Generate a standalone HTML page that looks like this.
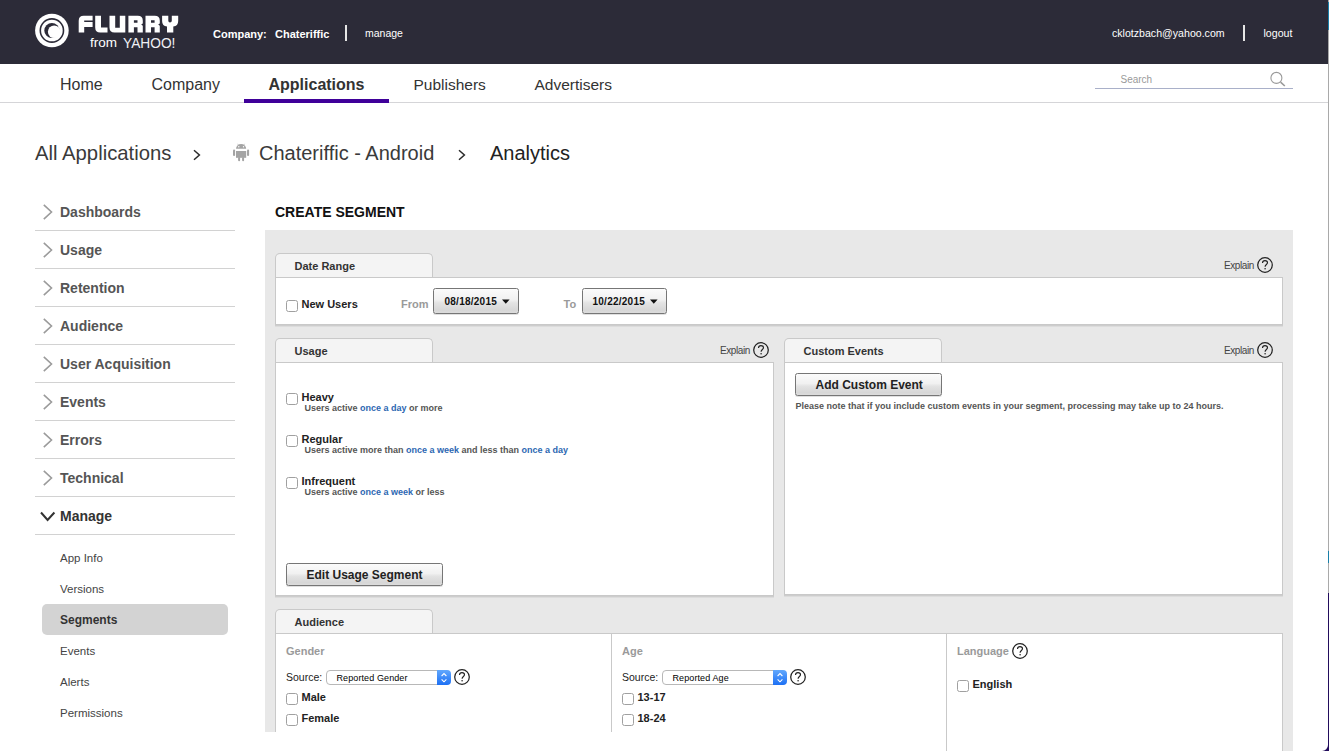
<!DOCTYPE html>
<html><head><meta charset="utf-8">
<style>
*{box-sizing:border-box}
html,body{margin:0;padding:0}
body{width:1329px;height:751px;overflow:hidden;position:relative;background:#fff;font-family:"Liberation Sans",sans-serif;color:#333}
.a{position:absolute;white-space:nowrap}
.t{position:absolute;white-space:nowrap;line-height:1}
.sep{position:absolute;left:35px;width:200px;height:1px;background:#d2d2d2}
.panel{position:absolute;background:#fff;border:1px solid #c9c9c9}
.tab{position:absolute;background:#f4f4f4;border:1px solid #c9c9c9;border-bottom:none;border-radius:5px 5px 0 0}
.cb{position:absolute;width:12px;height:12px;border:1px solid #a0a0a0;border-radius:2.5px;background:#fff}
.btn{position:absolute;border:1px solid #767676;border-radius:2.5px;background:linear-gradient(#fbfbfb,#f1f1f1 45%,#e3e3e3 58%,#d7d7d7 88%,#dcdcdc);box-shadow:0 1px 0 rgba(0,0,0,.12)}
.blue{color:#2d67b2}
</style></head><body>

<div class="a" style="left:0px;top:0px;width:1328px;height:64px;background:#2c2b38;"></div>
<div class="a" style="left:1328px;top:0px;width:1px;height:751px;background:#a9a9a9;"></div>
<div class="a" style="left:1328px;top:2px;width:1px;height:28px;background:#1a7fa8;"></div>
<div class="a" style="left:1328px;top:551px;width:1px;height:12px;background:#1a7fa8;"></div>
<div class="a" style="left:1328px;top:593px;width:1px;height:158px;background:#220c5c;"></div>
<svg class="a" style="left:0;top:0" width="200" height="64" viewBox="0 0 200 64">
  <circle cx="51.9" cy="30.5" r="16.8" fill="#fff"/>
  <circle cx="51.9" cy="30.5" r="11.6" fill="none" stroke="#2c2b38" stroke-width="1.6"/>
  <circle cx="51.9" cy="30.5" r="7.6" fill="#2c2b38"/>
  <circle cx="54.2" cy="31.8" r="6.3" fill="#fff"/>
  <path fill="#fff" d="M78.7,32.5 V20.7 Q78.7,15.7 83.7,15.7 H92.6 V20.6 H84.2 V22 H92.6 V26.9 H84.2 V32.5 Z"/>
  <path fill="#fff" d="M95.2,15.7 H101 V27.6 H107.5 V32.5 H100.2 Q95.2,32.5 95.2,27.5 Z"/>
  <path fill="#fff" d="M109.5,15.7 H115.2 V27.8 H119.8 V15.7 H125.3 V32.5 H114.5 Q109.5,32.5 109.5,27.5 Z"/>
  <path fill="#fff" fill-rule="evenodd" d="M128.4,32.6 V15.8 H137.8 Q142.8,15.8 142.8,20.8 V23.6 L141.2,24.6 L142.8,25.8 V32.6 H137.5 V27.2 H133.9 V32.6 Z M133.9,20.2 H137.5 V22.7 H133.9 Z"/>
  <path fill="#fff" fill-rule="evenodd" d="M145.5,32.6 V15.8 H154.8 Q159.8,15.8 159.8,20.8 V23.6 L158.2,24.6 L159.8,25.8 V32.6 H154.6 V27.2 H151 V32.6 Z M151,20.2 H154.6 V22.7 H151 Z"/>
  <path fill="#fff" d="M162.1,15.8 H168.3 V20.8 Q168.3,22.4 170,22.4 Q171.8,22.4 171.8,20.8 V15.8 H178.2 V21 Q178.2,26 173.3,26.6 V32.6 H167 V26.6 Q162.1,26 162.1,21 Z"/>
</svg>
<div class="t" style="left:90px;top:36px;font-size:13.5px;color:#fff">from</div>
<div class="t" style="left:123px;top:35px;font-size:15px;color:#f0f0f4;transform:scaleX(0.915);transform-origin:0 0">YAHOO!</div>
<div class="t" style="left:213px;top:29px;font-size:11px;color:#fff;font-weight:bold">Company:</div>
<div class="t" style="left:275px;top:29px;font-size:11px;color:#fff;font-weight:bold">Chateriffic</div>
<div class="a" style="left:345px;top:25px;width:1.6px;height:16px;background:#e6e6e6;"></div>
<div class="t" style="left:365px;top:28px;font-size:10.5px;color:#fff">manage</div>
<div class="t" style="left:1112px;top:28px;font-size:10.6px;color:#fff">cklotzbach@yahoo.com</div>
<div class="a" style="left:1243.3px;top:25px;width:1.6px;height:16px;background:#e6e6e6;"></div>
<div class="t" style="left:1263.5px;top:28px;font-size:10.6px;color:#fff">logout</div>
<div class="a" style="left:0px;top:102px;width:1328px;height:1px;background:#d5d5d8;"></div>
<div class="a" style="left:244px;top:99px;width:145px;height:4px;background:#3f0099;"></div>
<div class="t" style="left:60px;top:77px;font-size:16px;color:#333">Home</div>
<div class="t" style="left:151.5px;top:77px;font-size:16px;color:#333">Company</div>
<div class="t" style="left:268.5px;top:77px;font-size:16px;color:#333;font-weight:bold">Applications</div>
<div class="t" style="left:413.5px;top:77px;font-size:15.5px;color:#333">Publishers</div>
<div class="t" style="left:534.5px;top:77px;font-size:15.5px;color:#333">Advertisers</div>
<div class="a" style="left:1095px;top:88px;width:198px;height:1px;background:#a9b0c9;"></div>
<div class="t" style="left:1120.5px;top:75px;font-size:10px;color:#9a9a9a">Search</div>
<svg class="a" style="left:1266px;top:68px" width="24" height="22" viewBox="1266 68 24 22">
  <circle cx="1276.4" cy="77.9" r="5.5" fill="none" stroke="#9a9a9a" stroke-width="1.1"/>
  <line x1="1280.6" y1="82.1" x2="1284.8" y2="86" stroke="#9a9a9a" stroke-width="1.6"/>
</svg>
<div class="t" style="left:35px;top:143px;font-size:20.3px;color:#3a3a3a">All Applications</div>
<svg class="a" style="left:190px;top:148px" width="14" height="14" viewBox="190 148 14 14"><polyline points="194,150.2 199.4,155 194,159.8" fill="none" stroke="#2a2a2a" stroke-width="1.5"/></svg>
<svg class="a" style="left:230px;top:142px" width="22" height="22" viewBox="230 142 22 22">
  <path d="M236,148.7 A5.1,4.6 0 0 1 246.2,148.7 Z" fill="#a4a4a4"/>
  <rect x="236" y="151" width="10.2" height="6.8" fill="#a4a4a4"/><line x1="237.6" y1="143.8" x2="238.8" y2="145.6" stroke="#a4a4a4" stroke-width="0.6"/><line x1="244.6" y1="143.8" x2="243.4" y2="145.6" stroke="#a4a4a4" stroke-width="0.6"/>
  <rect x="233" y="149.6" width="2.1" height="6.4" rx="1" fill="#a4a4a4"/>
  <rect x="247" y="149.6" width="2.1" height="6.4" rx="1" fill="#a4a4a4"/>
  <rect x="238.1" y="157" width="2" height="4.2" rx="1" fill="#a4a4a4"/>
  <rect x="242.1" y="157" width="2" height="4.2" rx="1" fill="#a4a4a4"/>
  <circle cx="238.8" cy="146.7" r="0.7" fill="#fff"/>
  <circle cx="243.5" cy="146.7" r="0.7" fill="#fff"/>
</svg>
<div class="t" style="left:259px;top:143px;font-size:20px;color:#3a3a3a">Chateriffic - Android</div>
<svg class="a" style="left:455px;top:148px" width="14" height="14" viewBox="455 148 14 14"><polyline points="459,150.2 464.4,155 459,159.8" fill="none" stroke="#2a2a2a" stroke-width="1.5"/></svg>
<div class="t" style="left:490px;top:143px;font-size:20px;color:#222">Analytics</div>
<div class="t" style="left:60px;top:205px;font-size:14px;font-weight:bold;color:#555">Dashboards</div>
<svg class="a" style="left:40px;top:202.5px" width="16" height="18" viewBox="0 0 16 18"><polyline points="3.8,1.8 11.5,9 3.8,16.2" fill="none" stroke="#9b9b9b" stroke-width="1.6"/></svg>
<div class="sep" style="top:230px"></div>
<div class="t" style="left:60px;top:243px;font-size:14px;font-weight:bold;color:#555">Usage</div>
<svg class="a" style="left:40px;top:240.5px" width="16" height="18" viewBox="0 0 16 18"><polyline points="3.8,1.8 11.5,9 3.8,16.2" fill="none" stroke="#9b9b9b" stroke-width="1.6"/></svg>
<div class="sep" style="top:268px"></div>
<div class="t" style="left:60px;top:281px;font-size:14px;font-weight:bold;color:#555">Retention</div>
<svg class="a" style="left:40px;top:278.5px" width="16" height="18" viewBox="0 0 16 18"><polyline points="3.8,1.8 11.5,9 3.8,16.2" fill="none" stroke="#9b9b9b" stroke-width="1.6"/></svg>
<div class="sep" style="top:306px"></div>
<div class="t" style="left:60px;top:319px;font-size:14px;font-weight:bold;color:#555">Audience</div>
<svg class="a" style="left:40px;top:316.5px" width="16" height="18" viewBox="0 0 16 18"><polyline points="3.8,1.8 11.5,9 3.8,16.2" fill="none" stroke="#9b9b9b" stroke-width="1.6"/></svg>
<div class="sep" style="top:344px"></div>
<div class="t" style="left:60px;top:357px;font-size:14px;font-weight:bold;color:#555">User Acquisition</div>
<svg class="a" style="left:40px;top:354.5px" width="16" height="18" viewBox="0 0 16 18"><polyline points="3.8,1.8 11.5,9 3.8,16.2" fill="none" stroke="#9b9b9b" stroke-width="1.6"/></svg>
<div class="sep" style="top:382px"></div>
<div class="t" style="left:60px;top:395px;font-size:14px;font-weight:bold;color:#555">Events</div>
<svg class="a" style="left:40px;top:392.5px" width="16" height="18" viewBox="0 0 16 18"><polyline points="3.8,1.8 11.5,9 3.8,16.2" fill="none" stroke="#9b9b9b" stroke-width="1.6"/></svg>
<div class="sep" style="top:420px"></div>
<div class="t" style="left:60px;top:433px;font-size:14px;font-weight:bold;color:#555">Errors</div>
<svg class="a" style="left:40px;top:430.5px" width="16" height="18" viewBox="0 0 16 18"><polyline points="3.8,1.8 11.5,9 3.8,16.2" fill="none" stroke="#9b9b9b" stroke-width="1.6"/></svg>
<div class="sep" style="top:458px"></div>
<div class="t" style="left:60px;top:471px;font-size:14px;font-weight:bold;color:#555">Technical</div>
<svg class="a" style="left:40px;top:468.5px" width="16" height="18" viewBox="0 0 16 18"><polyline points="3.8,1.8 11.5,9 3.8,16.2" fill="none" stroke="#9b9b9b" stroke-width="1.6"/></svg>
<div class="sep" style="top:496px"></div>
<div class="t" style="left:60px;top:509px;font-size:14px;font-weight:bold;color:#333">Manage</div>
<svg class="a" style="left:38px;top:508px" width="20" height="16" viewBox="0 0 20 16"><polyline points="3,4.5 9.6,12 16.4,4.5" fill="none" stroke="#333" stroke-width="2"/></svg>
<div class="sep" style="top:534px"></div>
<div class="a" style="left:42px;top:604px;width:186px;height:31px;background:#d3d3d3;border-radius:5px"></div>
<div class="t" style="left:60px;top:553px;font-size:11.5px;color:#444">App Info</div>
<div class="t" style="left:60px;top:584px;font-size:11.5px;color:#444">Versions</div>
<div class="t" style="left:60px;top:614px;font-size:12px;font-weight:bold;color:#333">Segments</div>
<div class="t" style="left:60px;top:646px;font-size:11.5px;color:#444">Events</div>
<div class="t" style="left:60px;top:677px;font-size:11.5px;color:#444">Alerts</div>
<div class="t" style="left:60px;top:708px;font-size:11.5px;color:#444">Permissions</div>
<div class="t" style="left:275px;top:205px;font-size:14px;font-weight:bold;color:#111">CREATE SEGMENT</div>
<div class="a" style="left:265px;top:230px;width:1028px;height:521px;background:#e8e8e8;"></div>
<div class="tab" style="left:275px;top:253px;width:158px;height:25px"></div><div class="t" style="left:294.5px;top:261px;font-size:11px;font-weight:bold;color:#333">Date Range</div>
<div class="panel" style="left:275px;top:277px;width:1008px;height:48px"></div><div class="a" style="left:275px;top:325px;width:1008px;height:1px;background:#cdcdcd;"></div><div class="a" style="left:275px;top:326px;width:1008px;height:1px;background:#dcdcdc;"></div>
<div class="t" style="left:1224px;top:261px;font-size:10px;color:#444;letter-spacing:-0.4px">Explain</div>
<svg class="a" style="left:1256.8px;top:256.8px" width="16" height="16" viewBox="0 0 16 16"><circle cx="8" cy="8" r="7.3" fill="none" stroke="#222" stroke-width="1.25"/><path d="M5.5,6.1 C5.5,4.5 6.6,3.6 8,3.6 C9.5,3.6 10.5,4.6 10.5,5.8 C10.5,7.5 8.1,7.6 8.1,9.7" fill="none" stroke="#222" stroke-width="1.15"/><circle cx="8.1" cy="11.8" r="0.8" fill="#222"/></svg>
<div class="cb" style="left:286px;top:300px"></div>
<div class="t" style="left:301.5px;top:299px;font-size:11px;font-weight:bold;color:#222">New Users</div>
<div class="t" style="left:401px;top:299px;font-size:11px;font-weight:bold;color:#9a9a9a">From</div>
<div class="btn" style="left:433px;top:288px;width:86px;height:26px"></div>
<div class="t" style="left:444.5px;top:297px;font-size:10px;font-weight:bold;color:#111;letter-spacing:0.25px">08/18/2015</div>
<svg class="a" style="left:501.5px;top:299px" width="9" height="6" viewBox="0 0 9 6"><polygon points="0,0.5 7.6,0.5 3.8,4.8" fill="#111"/></svg>
<div class="t" style="left:563.5px;top:299px;font-size:11px;font-weight:bold;color:#9a9a9a">To</div>
<div class="btn" style="left:582px;top:288px;width:85px;height:26px"></div>
<div class="t" style="left:592.5px;top:297px;font-size:10px;font-weight:bold;color:#111;letter-spacing:0.25px">10/22/2015</div>
<svg class="a" style="left:650px;top:299px" width="9" height="6" viewBox="0 0 9 6"><polygon points="0,0.5 7.6,0.5 3.8,4.8" fill="#111"/></svg>
<div class="tab" style="left:275px;top:338px;width:158px;height:25px"></div><div class="t" style="left:294.5px;top:346px;font-size:11px;font-weight:bold;color:#333">Usage</div>
<div class="panel" style="left:275px;top:362px;width:499px;height:234px"></div><div class="a" style="left:275px;top:596px;width:499px;height:1px;background:#cdcdcd;"></div><div class="a" style="left:275px;top:597px;width:499px;height:1px;background:#dcdcdc;"></div>
<div class="t" style="left:720px;top:346px;font-size:10px;color:#444;letter-spacing:-0.4px">Explain</div>
<svg class="a" style="left:753px;top:342px" width="16" height="16" viewBox="0 0 16 16"><circle cx="8" cy="8" r="7.3" fill="none" stroke="#222" stroke-width="1.25"/><path d="M5.5,6.1 C5.5,4.5 6.6,3.6 8,3.6 C9.5,3.6 10.5,4.6 10.5,5.8 C10.5,7.5 8.1,7.6 8.1,9.7" fill="none" stroke="#222" stroke-width="1.15"/><circle cx="8.1" cy="11.8" r="0.8" fill="#222"/></svg>
<div class="cb" style="left:286px;top:393px"></div>
<div class="t" style="left:301.5px;top:392px;font-size:11px;font-weight:bold;color:#222">Heavy</div>
<div class="t" style="left:304.5px;top:404px;font-size:9px;font-weight:bold;color:#555">Users active <span class="blue">once a day</span> or more</div>
<div class="cb" style="left:286px;top:435px"></div>
<div class="t" style="left:301.5px;top:434px;font-size:11px;font-weight:bold;color:#222">Regular</div>
<div class="t" style="left:304.5px;top:446px;font-size:9px;font-weight:bold;color:#555">Users active more than <span class="blue">once a week</span> and less than <span class="blue">once a day</span></div>
<div class="cb" style="left:286px;top:477px"></div>
<div class="t" style="left:301.5px;top:476px;font-size:11px;font-weight:bold;color:#222">Infrequent</div>
<div class="t" style="left:304.5px;top:488px;font-size:9px;font-weight:bold;color:#555">Users active <span class="blue">once a week</span> or less</div>
<div class="btn" style="left:286px;top:563px;width:157px;height:23px"></div>
<div class="t" style="left:306.5px;top:569px;font-size:12px;font-weight:bold;color:#222">Edit Usage Segment</div>
<div class="tab" style="left:784px;top:338px;width:158px;height:25px"></div><div class="t" style="left:803.5px;top:346px;font-size:11px;font-weight:bold;color:#333">Custom Events</div>
<div class="panel" style="left:784px;top:362px;width:499px;height:233px"></div><div class="a" style="left:784px;top:595px;width:499px;height:1px;background:#cdcdcd;"></div><div class="a" style="left:784px;top:596px;width:499px;height:1px;background:#dcdcdc;"></div>
<div class="t" style="left:1224px;top:346px;font-size:10px;color:#444;letter-spacing:-0.4px">Explain</div>
<svg class="a" style="left:1256.8px;top:342px" width="16" height="16" viewBox="0 0 16 16"><circle cx="8" cy="8" r="7.3" fill="none" stroke="#222" stroke-width="1.25"/><path d="M5.5,6.1 C5.5,4.5 6.6,3.6 8,3.6 C9.5,3.6 10.5,4.6 10.5,5.8 C10.5,7.5 8.1,7.6 8.1,9.7" fill="none" stroke="#222" stroke-width="1.15"/><circle cx="8.1" cy="11.8" r="0.8" fill="#222"/></svg>
<div class="btn" style="left:795px;top:373px;width:147px;height:23px"></div>
<div class="t" style="left:815.5px;top:379px;font-size:12px;font-weight:bold;color:#222">Add Custom Event</div>
<div class="t" style="left:795.5px;top:402px;font-size:9px;font-weight:bold;color:#555">Please note that if you include custom events in your segment, processing may take up to 24 hours.</div>
<div class="tab" style="left:275px;top:609px;width:158px;height:25px"></div><div class="t" style="left:294.5px;top:617px;font-size:11px;font-weight:bold;color:#333">Audience</div>
<div class="panel" style="left:275px;top:633px;width:1008px;height:140px"></div>
<div class="a" style="left:611px;top:633px;width:1px;height:118px;background:#c9c9c9;"></div>
<div class="a" style="left:946px;top:633px;width:1px;height:118px;background:#c9c9c9;"></div>
<div class="t" style="left:286px;top:646px;font-size:11px;font-weight:bold;color:#9a9a9a">Gender</div>
<div class="t" style="left:286px;top:672px;font-size:10.5px;color:#222">Source:</div>
<div class="a" style="left:326px;top:670px;width:124px;height:15px;border:1px solid #b8b8b8;border-radius:4px;background:#fff"></div><div class="a" style="left:437px;top:670px;width:13.5px;height:15px;background:linear-gradient(#62a8fd,#1d70f4);border-radius:0 4px 4px 0"></div><svg class="a" style="left:439.5px;top:671px" width="8" height="13" viewBox="0 0 8 13"><polyline points="1.6,5 4,2.6 6.4,5" fill="none" stroke="#fff" stroke-width="1.1"/><polyline points="1.6,8.4 4,10.8 6.4,8.4" fill="none" stroke="#fff" stroke-width="1.1"/></svg><div class="t" style="left:336.5px;top:674px;font-size:9px;color:#000;letter-spacing:0.1px">Reported Gender</div>
<svg class="a" style="left:454px;top:669px" width="16" height="16" viewBox="0 0 16 16"><circle cx="8" cy="8" r="7.3" fill="none" stroke="#222" stroke-width="1.25"/><path d="M5.5,6.1 C5.5,4.5 6.6,3.6 8,3.6 C9.5,3.6 10.5,4.6 10.5,5.8 C10.5,7.5 8.1,7.6 8.1,9.7" fill="none" stroke="#222" stroke-width="1.15"/><circle cx="8.1" cy="11.8" r="0.8" fill="#222"/></svg>
<div class="cb" style="left:286px;top:693px"></div>
<div class="t" style="left:301.5px;top:692px;font-size:11px;font-weight:bold;color:#222">Male</div>
<div class="cb" style="left:286px;top:714px"></div>
<div class="t" style="left:301.5px;top:713px;font-size:11px;font-weight:bold;color:#222">Female</div>
<div class="t" style="left:622px;top:646px;font-size:11px;font-weight:bold;color:#9a9a9a">Age</div>
<div class="t" style="left:622px;top:672px;font-size:10.5px;color:#222">Source:</div>
<div class="a" style="left:662px;top:670px;width:124px;height:15px;border:1px solid #b8b8b8;border-radius:4px;background:#fff"></div><div class="a" style="left:773px;top:670px;width:13.5px;height:15px;background:linear-gradient(#62a8fd,#1d70f4);border-radius:0 4px 4px 0"></div><svg class="a" style="left:775.5px;top:671px" width="8" height="13" viewBox="0 0 8 13"><polyline points="1.6,5 4,2.6 6.4,5" fill="none" stroke="#fff" stroke-width="1.1"/><polyline points="1.6,8.4 4,10.8 6.4,8.4" fill="none" stroke="#fff" stroke-width="1.1"/></svg><div class="t" style="left:672.5px;top:674px;font-size:9px;color:#000;letter-spacing:0.1px">Reported Age</div>
<svg class="a" style="left:790px;top:669px" width="16" height="16" viewBox="0 0 16 16"><circle cx="8" cy="8" r="7.3" fill="none" stroke="#222" stroke-width="1.25"/><path d="M5.5,6.1 C5.5,4.5 6.6,3.6 8,3.6 C9.5,3.6 10.5,4.6 10.5,5.8 C10.5,7.5 8.1,7.6 8.1,9.7" fill="none" stroke="#222" stroke-width="1.15"/><circle cx="8.1" cy="11.8" r="0.8" fill="#222"/></svg>
<div class="cb" style="left:622px;top:693px"></div>
<div class="t" style="left:637.5px;top:692px;font-size:11px;font-weight:bold;color:#222">13-17</div>
<div class="cb" style="left:622px;top:714px"></div>
<div class="t" style="left:637.5px;top:713px;font-size:11px;font-weight:bold;color:#222">18-24</div>
<div class="t" style="left:957px;top:646px;font-size:11px;font-weight:bold;color:#9a9a9a">Language</div>
<svg class="a" style="left:1012px;top:643px" width="16" height="16" viewBox="0 0 16 16"><circle cx="8" cy="8" r="7.3" fill="none" stroke="#222" stroke-width="1.25"/><path d="M5.5,6.1 C5.5,4.5 6.6,3.6 8,3.6 C9.5,3.6 10.5,4.6 10.5,5.8 C10.5,7.5 8.1,7.6 8.1,9.7" fill="none" stroke="#222" stroke-width="1.15"/><circle cx="8.1" cy="11.8" r="0.8" fill="#222"/></svg>
<div class="cb" style="left:957px;top:680px"></div>
<div class="t" style="left:972.5px;top:679px;font-size:11px;font-weight:bold;color:#222">English</div>
<div class="a" style="left:265px;top:732px;width:681px;height:19px;background:#fff;"></div>
<svg class="a" style="left:1316px;top:739px" width="13" height="12" viewBox="1316 739 13 12"><path d="M1322,751 A6,6 0 0 0 1328,745 L1329,745 L1329,751 Z" fill="#220c5c"/></svg>
</body></html>
